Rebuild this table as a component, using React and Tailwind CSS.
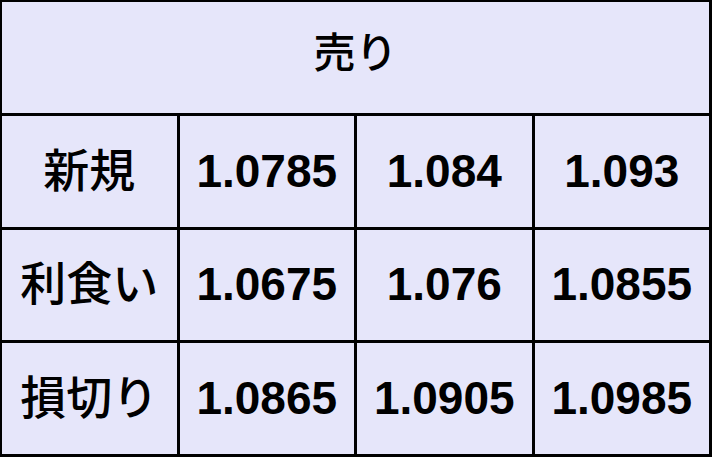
export default function App() {
  const rows = [
    ["新規", "1.0785", "1.084", "1.093"],
    ["利食い", "1.0675", "1.076", "1.0855"],
    ["損切り", "1.0865", "1.0905", "1.0985"],
  ];
  const font = { fontFamily: '"Liberation Sans", "Noto Sans CJK JP", sans-serif' };
  return (
    <div
      className="w-[712px] h-[457px] bg-black pt-[2px] pl-[2px] pr-[3px] pb-[3px] grid grid-cols-4 grid-rows-4 gap-[3px] text-black"
      style={font}
    >
      <div className="col-span-4 bg-[#e6e6fa] flex items-center justify-center pb-[8px] text-[42px] font-medium">
        売り
      </div>
      {rows.map((r) =>
        r.map((c, i) => (
          <div
            key={r[0] + i}
            className={`bg-[#e6e6fa] flex items-center justify-center text-[46px] ${i === 0 ? "font-medium" : "font-bold"}`}
          >
            {c}
          </div>
        ))
      )}
    </div>
  );
}
